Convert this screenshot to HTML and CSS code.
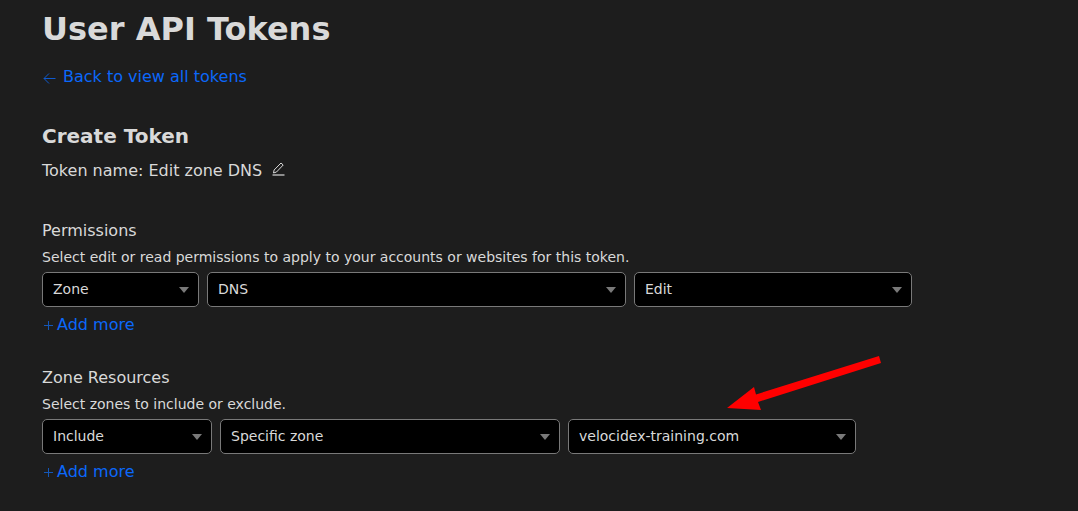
FILE: index.html
```html
<!DOCTYPE html>
<html lang="en">
<head>
<meta charset="utf-8">
<meta name="viewport" content="width=device-width, initial-scale=1">
<title>User API Tokens</title>
<link rel="stylesheet" href="styles.css">
</head>
<body>
<main class="page">
  <h1 class="title">User API Tokens</h1>
  <a class="link back" href="#tokens">
    <svg class="icon-back" viewBox="0 0 14 12" aria-hidden="true"><path d="M13.500 6.500H2M7 1.500l-5 5 5 5"/></svg>
    <span>Back to view all tokens</span>
  </a>

  <h2 class="subtitle">Create Token</h2>
  <div class="token-name">
    <span>Token name: Edit zone DNS</span>
    <button class="edit" type="button" aria-label="Edit token name">
      <svg class="icon-edit" viewBox="0 0 12 14" aria-hidden="true"><path class="pencil" d="M1 11l.6-3L8.500 1l2.200 2L4 10z"/><path class="baseline" d="M0 13h12"/></svg>
    </button>
  </div>

  <section class="section">
    <h3 class="heading">Permissions</h3>
    <p class="hint">Select edit or read permissions to apply to your accounts or websites for this token.</p>
    <div class="row row-permissions">
      <div class="field"><select class="select" aria-label="Permission scope"><option>Zone</option></select><svg class="caret" viewBox="0 0 10 6" aria-hidden="true"><path d="M0 0h10L5 6z"/></svg></div>
      <div class="field"><select class="select" aria-label="Permission group"><option>DNS</option></select><svg class="caret" viewBox="0 0 10 6" aria-hidden="true"><path d="M0 0h10L5 6z"/></svg></div>
      <div class="field"><select class="select" aria-label="Access level"><option>Edit</option></select><svg class="caret" viewBox="0 0 10 6" aria-hidden="true"><path d="M0 0h10L5 6z"/></svg></div>
    </div>
    <button class="link add" type="button">
      <svg class="icon-plus" viewBox="0 0 10 10" aria-hidden="true"><path d="M5.500 1v9M1 5.500h9"/></svg>
      <span>Add more</span>
    </button>
  </section>

  <section class="section">
    <h3 class="heading">Zone Resources</h3>
    <p class="hint">Select zones to include or exclude.</p>
    <div class="row row-resources">
      <div class="field"><select class="select" aria-label="Include or exclude"><option>Include</option></select><svg class="caret" viewBox="0 0 10 6" aria-hidden="true"><path d="M0 0h10L5 6z"/></svg></div>
      <div class="field"><select class="select" aria-label="Resource type"><option>Specific zone</option></select><svg class="caret" viewBox="0 0 10 6" aria-hidden="true"><path d="M0 0h10L5 6z"/></svg></div>
      <div class="field"><select class="select" aria-label="Zone"><option>velocidex-training.com</option></select><svg class="caret" viewBox="0 0 10 6" aria-hidden="true"><path d="M0 0h10L5 6z"/></svg>
        <svg class="pointer" viewBox="0 0 154 56" aria-hidden="true"><path d="M0 53L27 32l2 7.500L152 1l2 7L31 47l3 8z"/></svg>
      </div>
    </div>
    <button class="link add" type="button">
      <svg class="icon-plus" viewBox="0 0 10 10" aria-hidden="true"><path d="M5.500 1v9M1 5.500h9"/></svg>
      <span>Add more</span>
    </button>
  </section>
</main>
</body>
</html>
```

FILE: styles.css
```css
* {
  box-sizing: border-box;
}

body {
  margin: 0;
  background: #1d1d1d;
  color: #d9d9d9;
  font: 16px/24px "DejaVu Sans", Verdana, sans-serif;
}

.page {
  padding: 9px 42px 20px;
}

.title,
.subtitle,
.heading,
.hint {
  margin: 0;
}

.title {
  font-size: 32px;
  line-height: 40px;
}

.link {
  display: flex;
  align-items: center;
  width: fit-content;
  padding: 0;
  border: 0;
  background: none;
  color: #0b68fa;
  font: inherit;
  text-decoration: none;
  cursor: pointer;
}

.back {
  gap: 7px;
  margin-top: 16px;
}

.add {
  gap: 5px;
  margin-top: 6px;
}

.link svg,
.edit svg {
  display: block;
  fill: none;
  stroke: currentColor;
}

.link .icon-back {
  width: 14px;
  height: 12px;
  margin-top: 2px;
  stroke: #0f5acf;
}

.link .icon-plus {
  width: 10px;
  height: 10px;
  margin: 0 0 0 1px;
  stroke: #1457b8;
}

.add {
  gap: 4px;
}

.subtitle {
  margin-top: 35px;
  font-size: 20px;
  line-height: 24px;
}

.token-name {
  display: flex;
  align-items: center;
  gap: 10px;
  margin-top: 11px;
}

.edit {
  padding: 0 0 5px;
  border: 0;
  background: none;
  color: inherit;
  cursor: pointer;
}

.icon-edit {
  width: 13px;
  height: 14px;
}

.edit .baseline {
  stroke: #8d8d8d;
  stroke-width: 2;
}

.section {
  margin-top: 36px;
}

.section + .section {
  margin-top: 29px;
}

.heading {
  font-size: 16px;
  font-weight: 400;
  line-height: 24px;
}

.hint {
  margin-top: 3px;
  font-size: 14px;
  line-height: 22px;
}

.row {
  display: grid;
  gap: 8px;
  margin-top: 4px;
}

.row-permissions {
  max-width: 870px;
  grid-template-columns: 157fr 419fr 278fr;
}

.row-resources {
  max-width: 814px;
  grid-template-columns: 170fr 340fr 288fr;
}

.field {
  position: relative;
  min-width: 0;
}

.select {
  display: block;
  width: 100%;
  height: 35px;
  padding: 0 32px 2px 10px;
  appearance: none;
  border: 1px solid #797979;
  border-radius: 5px;
  background: #000;
  color: #d9d9d9;
  font: 14px/20px "DejaVu Sans", Verdana, sans-serif;
}

.caret {
  position: absolute;
  top: 15px;
  right: 10px;
  width: 10px;
  height: 6px;
  fill: #797979;
  pointer-events: none;
}

.pointer {
  position: absolute;
  left: 159px;
  bottom: 43px;
  width: 154px;
  height: 56px;
  fill: #f00;
  pointer-events: none;
}
```
